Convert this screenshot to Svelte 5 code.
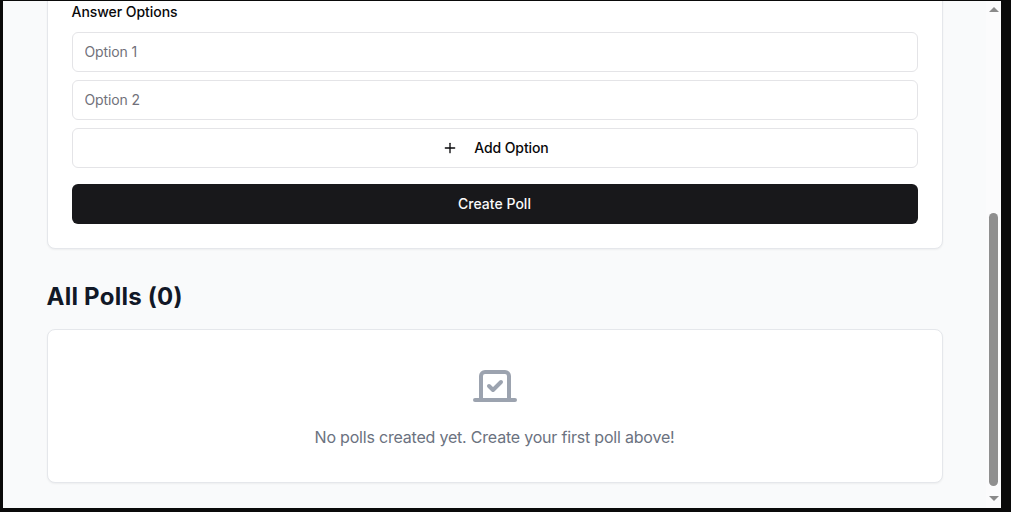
<script>
  let options = $state(['Option 1', 'Option 2']);
  let polls = $state([]);

  function addOption() {
    options = [...options, `Option ${options.length + 1}`];
  }
</script>

<div class="frame">
  <div class="window">
    <main class="page">
      <div class="container">
        <section class="card form">
          <span class="label">Answer Options</span>
          <div class="options">
            {#each options as option}
              <input class="input" type="text" placeholder={option} />
            {/each}
            <button class="add" type="button" onclick={addOption}>
              <svg width="16" height="16" viewBox="0 0 24 24" fill="none" stroke="currentColor" stroke-width="2" stroke-linecap="round" stroke-linejoin="round">
                <path d="M5 12h14" />
                <path d="M12 5v14" />
              </svg>
              Add Option
            </button>
          </div>
          <button class="submit" type="button">Create Poll</button>
        </section>

        <h2 class="title">All Polls ({polls.length})</h2>

        <section class="card empty">
          <svg class="empty-icon" width="48" height="48" viewBox="0 0 24 24" fill="none" stroke="currentColor" stroke-width="2" stroke-linecap="round" stroke-linejoin="round">
            <path d="m9 12 2 2 4-4" />
            <path d="M5 7c0-1.1.9-2 2-2h10a2 2 0 0 1 2 2v12H5V7Z" />
            <path d="M22 19H2" />
          </svg>
          <p>No polls created yet. Create your first poll above!</p>
        </section>
      </div>
    </main>

    <div class="scrollbar">
      <span class="arrow up"></span>
      <div class="track"><div class="thumb"></div></div>
      <span class="arrow down"></span>
    </div>
  </div>
</div>

<style>
  :global(body) {
    background: #0a0a0a;
    overflow: hidden;
  }
  .frame {
    height: 512px;
    box-sizing: border-box;
    padding: 1px 10px 4px 3px;
    font-family: Inter, "Liberation Sans", sans-serif;
  }
  .window {
    display: flex;
    height: 100%;
    background: #f9fafb;
    overflow: hidden;
  }
  .page {
    flex: 1;
    min-width: 0;
    display: flex;
    flex-direction: column;
    justify-content: flex-end;
    overflow: hidden;
  }
  .container {
    width: 896px;
    margin: 0 auto;
    padding-bottom: 25px;
  }
  .card {
    background: #fff;
    border: 1px solid #e5e7eb;
    border-radius: 8px;
    box-shadow: 0 1px 2px rgba(0, 0, 0, 0.05);
  }
  .form {
    padding: 24px;
  }
  .label {
    display: block;
    font-size: 14px;
    font-weight: 500;
    line-height: 20px;
    letter-spacing: -0.05px;
    color: #09090b;
    margin-bottom: 10px;
  }
  .options {
    display: flex;
    flex-direction: column;
    gap: 8px;
  }
  .input {
    box-sizing: border-box;
    height: 40px;
    width: 100%;
    padding: 7px 12px 9px;
    border: 1px solid #e4e4e7;
    border-radius: 6px;
    background: #fff;
    font: 14px/20px Inter, "Liberation Sans", sans-serif;
    letter-spacing: -0.12px;
    outline: none;
  }
  .input::placeholder {
    color: #71717a;
    opacity: 1;
  }
  .add {
    display: flex;
    align-items: center;
    justify-content: center;
    gap: 16px;
    box-sizing: border-box;
    height: 40px;
    padding: 0 0 0 2px;
    border: 1px solid #e4e4e7;
    border-radius: 6px;
    background: #fff;
    color: #09090b;
    font: 500 14px/20px Inter, "Liberation Sans", sans-serif;
    letter-spacing: -0.1px;
    cursor: pointer;
  }
  .submit {
    display: block;
    width: 100%;
    height: 40px;
    margin-top: 16px;
    border: none;
    border-radius: 6px;
    background: #18181b;
    color: #fafafa;
    font: 500 14px/20px Inter, "Liberation Sans", sans-serif;
    letter-spacing: 0.02px;
    cursor: pointer;
  }
  .title {
    margin: 32px 0 16px;
    font-size: 24px;
    font-weight: 700;
    line-height: 32px;
    letter-spacing: 0.25px;
    color: #111827;
  }
  .empty {
    display: flex;
    flex-direction: column;
    align-items: center;
    padding: 32px 32px 33px;
  }
  .empty-icon {
    color: #9ca3af;
    margin-bottom: 15px;
  }
  .empty p {
    margin: 0;
    font-size: 16px;
    line-height: 24px;
    letter-spacing: -0.2px;
    color: #6b7280;
  }
  .scrollbar {
    width: 15px;
    flex: none;
    display: flex;
    flex-direction: column;
    align-items: center;
    background: #fbfbfc;
  }
  .arrow {
    flex: none;
    width: 0;
    height: 0;
    border-left: 5px solid transparent;
    border-right: 5px solid transparent;
  }
  .arrow.up {
    margin-top: 6px;
    border-bottom: 5px solid #8a8a8a;
  }
  .arrow.down {
    margin-bottom: 7px;
    border-top: 5px solid #8a8a8a;
  }
  .track {
    flex: 1;
    width: 100%;
    display: flex;
    flex-direction: column;
    justify-content: flex-end;
    align-items: center;
    padding-bottom: 10px;
  }
  .thumb {
    width: 9px;
    height: 273px;
    border-radius: 5px;
    background: #8f8f8f;
  }
</style>
